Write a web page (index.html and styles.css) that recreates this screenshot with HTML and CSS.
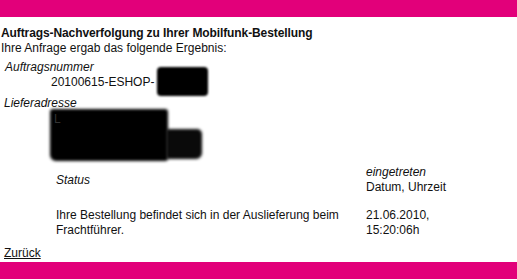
FILE: index.html
```html
<!DOCTYPE html>
<html lang="de">
<head>
<meta charset="utf-8">
<title>Auftrags-Nachverfolgung</title>
<link rel="stylesheet" href="styles.css">
</head>
<body>
<div class="bar"></div>
<main class="content">
  <h1 class="title">Auftrags-Nachverfolgung zu Ihrer Mobilfunk-Bestellung</h1>
  <p class="intro">Ihre Anfrage ergab das folgende Ergebnis:</p>
  <div class="label label-order">Auftragsnummer</div>
  <div class="order">20100615-ESHOP-<span class="redact-inline"></span></div>
  <div class="label label-addr">Lieferadresse</div>
  <div class="addr">
    <span class="glyph">L</span>
    <div class="redact-a"></div>
    <div class="redact-b"></div>
  </div>
  <div class="status">
    <div class="c1 head-status">Status</div>
    <div class="c2"><em>eingetreten</em><br>Datum, Uhrzeit</div>
    <div class="c1 row">Ihre Bestellung befindet sich in der Auslieferung beim Frachtführer.</div>
    <div class="c2 row">21.06.2010,<br>15:20:06h</div>
  </div>
  <a class="back" href="#">Zurück</a>
</main>
<div class="bar bar-bottom"></div>
</body>
</html>
```
FILE: styles.css
```css
html, body {
  margin: 0;
  padding: 0;
  background: #fff;
}
body {
  font-family: "Liberation Sans", Arial, sans-serif;
  font-size: 12px;
  line-height: 15px;
  color: #111;
  width: 517px;
  height: 280px;
  overflow: hidden;
}
.bar {
  height: 17px;
  background: #e2007a;
}
.bar-bottom {
  height: 17px;
}
.content {
  padding: 9px 0 1px 1px;
}
.title {
  font-size: 12px;
  line-height: 15px;
  font-weight: bold;
  letter-spacing: -0.1px;
  margin: 0;
}
.intro {
  margin: 0;
}
.label {
  font-style: italic;
}
.label-order {
  margin-top: 4px;
  padding-left: 4px;
}
.order {
  padding-left: 50px;
}
.redact-inline {
  display: inline-block;
  width: 51px;
  height: 29px;
  margin-top: -19px;
  margin-bottom: -10px;
  margin-left: 3px;
  background: #000;
  border-radius: 4px;
  filter: blur(1.3px);
  vertical-align: baseline;
}
.label-addr {
  margin-top: 6px;
  padding-left: 3px;
}
.addr {
  display: flex;
  align-items: flex-start;
  height: 52px;
  margin: -2px 0 0 49px;
  position: relative;
}
.glyph {
  position: absolute;
  left: 4px;
  top: 3px;
  color: #333;
  z-index: 2;
  font-size: 12px;
}
.redact-a {
  width: 118px;
  height: 52px;
  background: #000;
  border-radius: 3px 3px 3px 6px;
  filter: blur(1.6px);
}
.redact-b {
  width: 36px;
  height: 30px;
  margin-top: 20px;
  margin-left: -2px;
  background: #0a0a0a;
  border-radius: 2px 5px 6px 3px;
  filter: blur(1.6px);
}
.status {
  display: grid;
  grid-template-columns: 310px 140px;
  margin: 4px 0 0 55px;
  row-gap: 13px;
}
.head-status {
  font-style: italic;
  align-self: center;
}
.c2 em {
  font-style: italic;
}
.back {
  display: inline-block;
  margin: 8px 0 0 3px;
  color: #111;
  text-decoration: underline;
}
```
